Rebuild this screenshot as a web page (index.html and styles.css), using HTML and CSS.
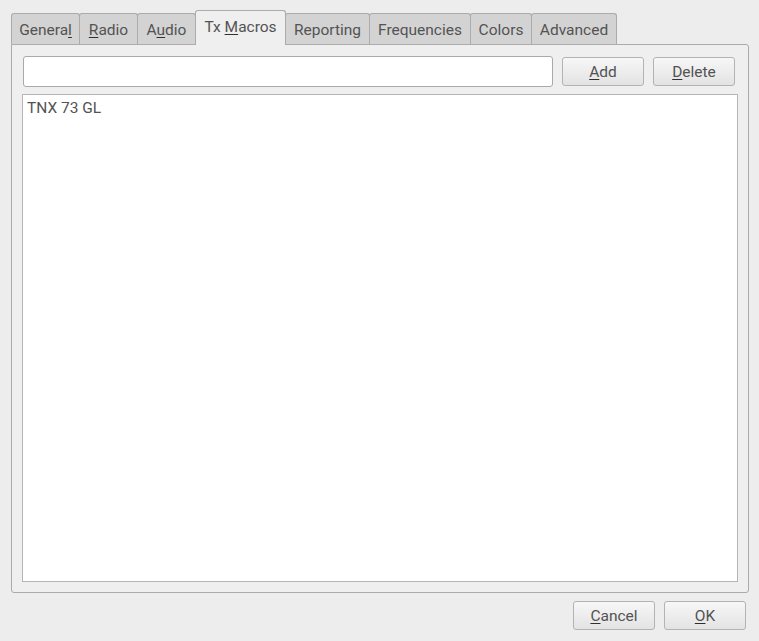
FILE: index.html
```html
<!DOCTYPE html>
<html>
<head>
<meta charset="utf-8">
<link rel="stylesheet" href="styles.css">
</head>
<body>
<div class="dialog">
  <div class="tabs">
    <div class="tab tab-general"><span>Genera<u>l</u></span></div>
    <div class="tab tab-radio"><span><u>R</u>adio</span></div>
    <div class="tab tab-audio"><span>A<u>u</u>dio</span></div>
    <div class="tab tab-macros active"><span>Tx <u>M</u>acros</span></div>
    <div class="tab tab-reporting"><span>Reportin<u>g</u></span></div>
    <div class="tab tab-freq"><span>Frequencies</span></div>
    <div class="tab tab-colors"><span>Colors</span></div>
    <div class="tab tab-advanced"><span>Advanced</span></div>
  </div>
  <div class="panel">
    <div class="row">
      <input class="field" type="text">
      <button class="btn"><u>A</u>dd</button>
      <button class="btn"><u>D</u>elete</button>
    </div>
    <div class="list">
      <div class="item">TNX 73 GL</div>
    </div>
  </div>
  <div class="footer">
    <button class="btn"><u>C</u>ancel</button>
    <button class="btn"><u>O</u>K</button>
  </div>
</div>
</body>
</html>
```
FILE: styles.css
```css
html, body {
  margin: 0;
  padding: 0;
  background: #ededed;
}
body {
  width: 759px;
  height: 641px;
  overflow: hidden;
  font-family: Roboto, "Liberation Sans", sans-serif;
  font-size: 15.5px;
  color: #535353;
}
u {
  text-decoration: underline;
  text-decoration-color: #303030;
  text-underline-offset: 2px;
}
.dialog {
  padding: 11px 11px 0 11px;
  display: flex;
  flex-direction: column;
}
.tabs {
  display: flex;
  align-items: flex-end;
  height: 33px;
}
.tab {
  box-sizing: border-box;
  height: 31px;
  margin-right: -1px;
  border: 1px solid #ababab;
  border-bottom: none;
  border-radius: 3px 3px 0 0;
  background: #d3d3d3;
  display: flex;
  align-items: center;
  justify-content: center;
  padding-top: 1px;
  white-space: nowrap;
}
.tab-general { width: 69px; }
.tab-radio { width: 59px; }
.tab-audio { width: 59px; }
.tab-macros { width: 91px; }
.tab-reporting { width: 85px; }
.tab-freq { width: 102px; }
.tab-colors { width: 62px; }
.tab-advanced { width: 86px; }
.tab.active {
  height: 35px;
  margin-bottom: -1px;
  background: #efefef;
  position: relative;
  z-index: 1;
  padding: 0 0 2px 0;
}
.panel {
  box-sizing: border-box;
  width: 738px;
  height: 549px;
  border: 1px solid #ababab;
  border-radius: 0 3px 3px 3px;
  background: #efefef;
  padding: 11px 10px 10px 10px;
  display: flex;
  flex-direction: column;
  gap: 7px;
}
.row {
  display: flex;
  align-items: center;
  gap: 9px;
  height: 31px;
}
.field {
  box-sizing: border-box;
  width: 530px;
  height: 31px;
  margin: 0 0 0 1px;
  border: 1px solid #a9a9a9;
  border-radius: 3px;
  background: #ffffff;
  outline: none;
  padding: 0 4px;
  font: inherit;
}
.btn {
  box-sizing: border-box;
  width: 82px;
  height: 29px;
  margin: 0;
  border: 1px solid #b3b3b3;
  border-radius: 3px;
  background: linear-gradient(#f7f7f7, #e3e3e3);
  font: inherit;
  color: #535353;
  padding: 0;
}
.list {
  box-sizing: border-box;
  width: 716px;
  height: 488px;
  border: 1px solid #b5b5b5;
  background: #ffffff;
  padding: 3px 4px;
}
.item {
  line-height: 20px;
}
.footer {
  display: flex;
  justify-content: flex-end;
  gap: 9px;
  padding: 8px 2px 0 0;
}
```
